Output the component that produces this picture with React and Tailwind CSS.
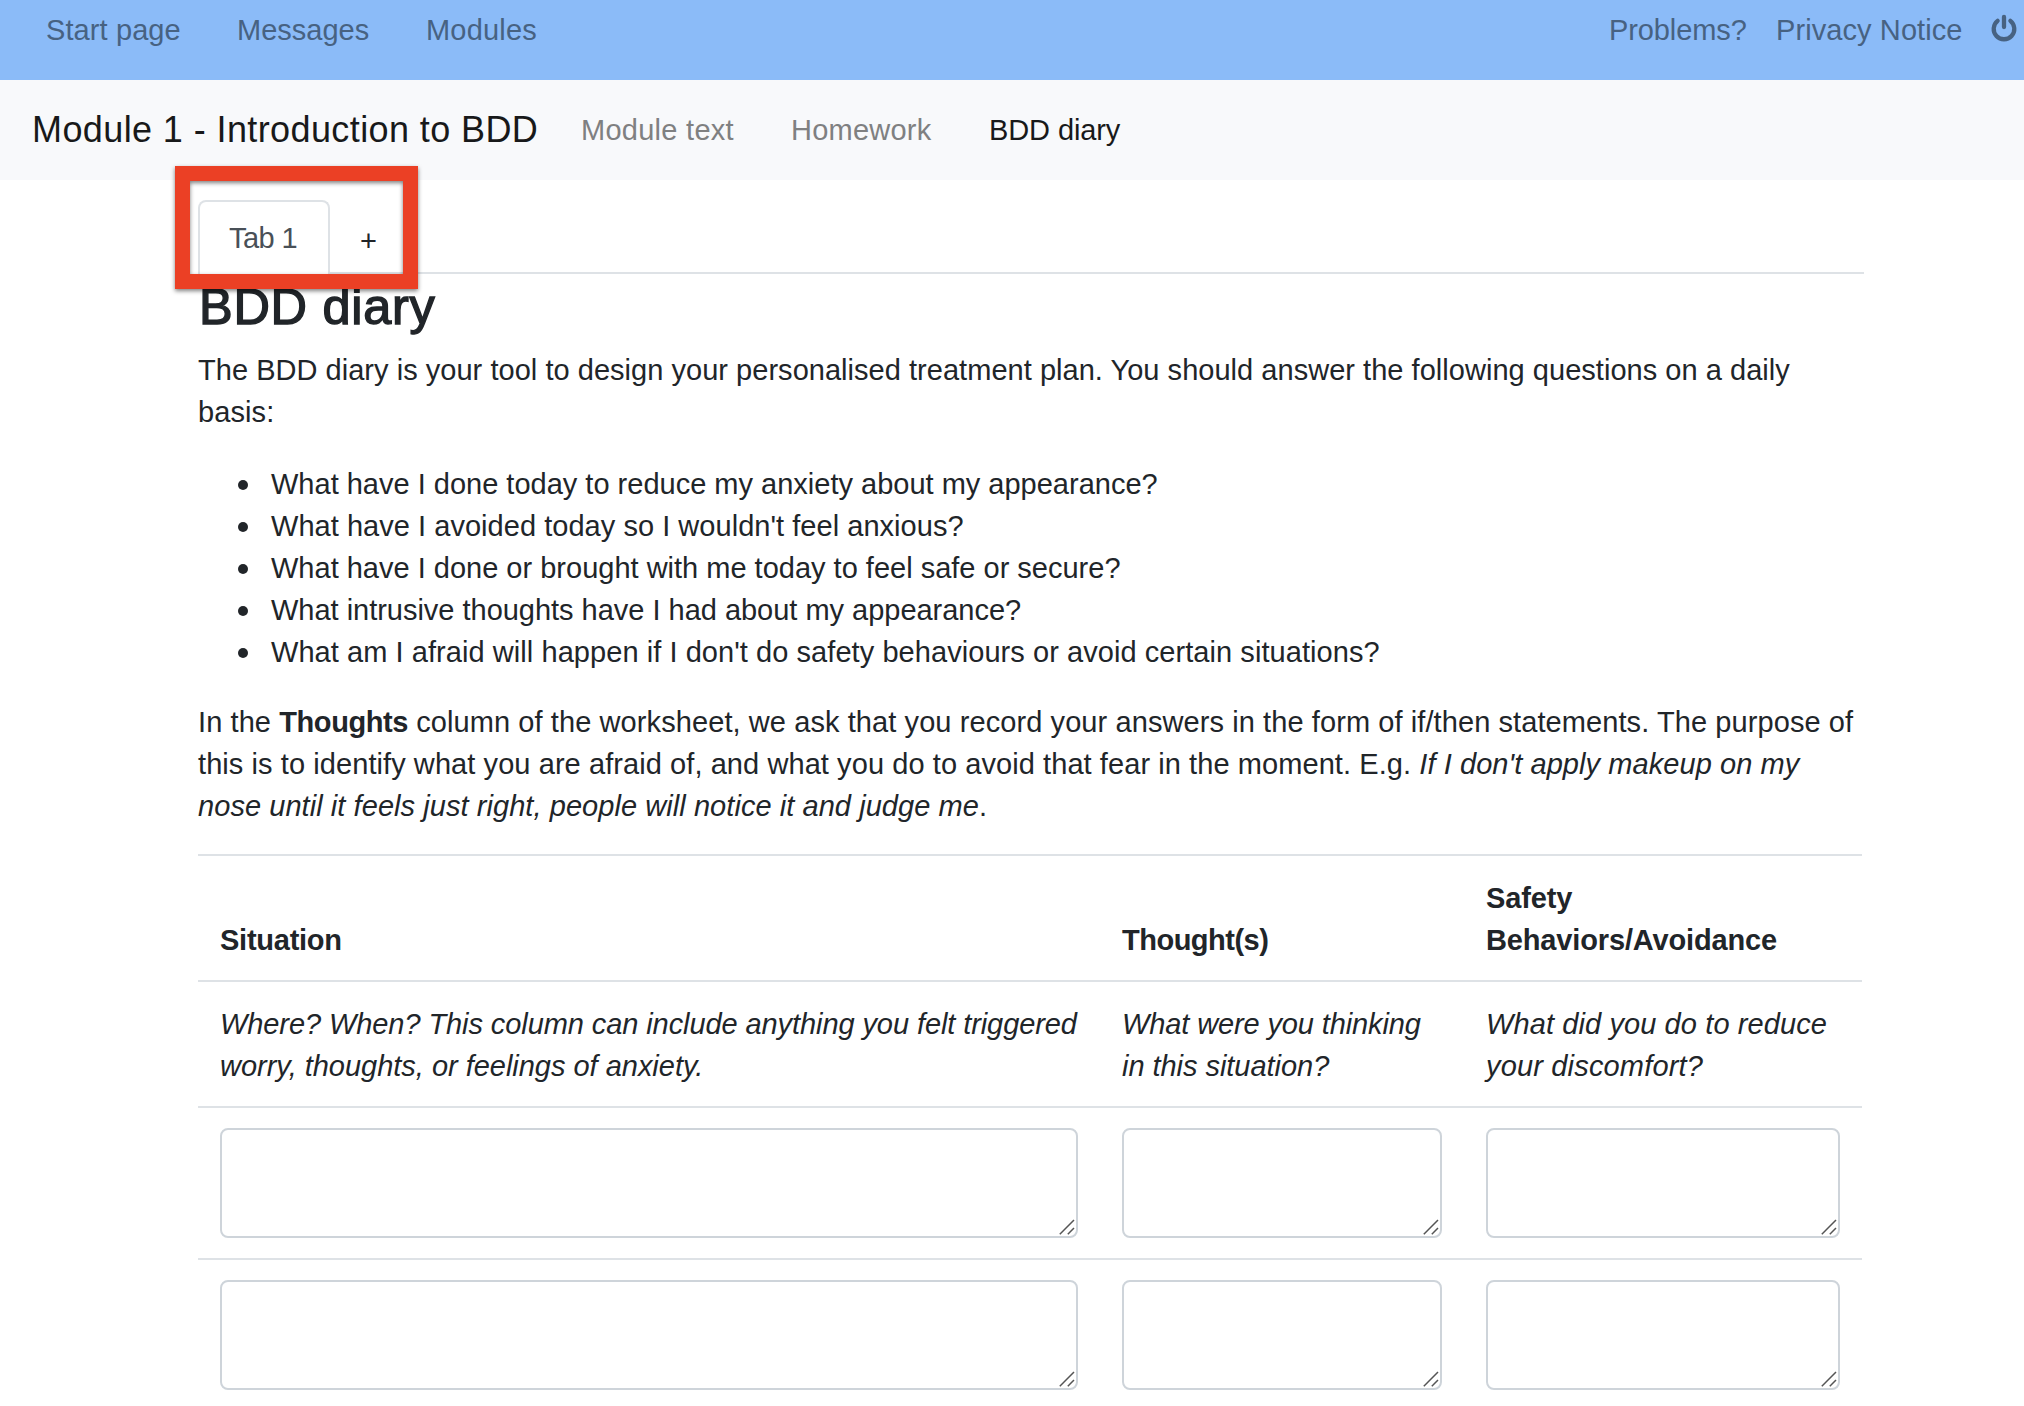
import React from "react";

function PowerIcon() {
  return (
    <svg width="26" height="28" viewBox="-13 -15 26 28" fill="none" stroke="currentColor" strokeWidth="4.3" strokeLinecap="round">
      <path d="M-6.4 -8.1A10.3 10.3 0 1 0 6.4 -8.1" />
      <path d="M0 -12V-2" />
    </svg>
  );
}

function Field() {
  return (
    <div className="relative h-[110px]">
      <textarea className="block h-full w-full resize-none rounded-[8px] border-2 border-[#ced4da] bg-white outline-none" />
      <svg className="absolute right-[3px] bottom-[3px]" width="16" height="16" viewBox="0 0 16 16" stroke="#555" strokeWidth="1.5" fill="none">
        <path d="M0.8 15.2L15 1M8.8 15.2L15 9" />
      </svg>
    </div>
  );
}

const L = ({ className = "", children }) => <span className={"block whitespace-pre " + className}>{children}</span>;

function Row({ children }) {
  return (
    <div className="grid h-[126px] grid-cols-[902px_364px_398px] border-t-2 border-[#dee2e6]">{children}</div>
  );
}

function Item({ className, children }) {
  return (
    <li className="flex items-center">
      <span className="mt-px mr-[23px] size-[10px] rounded-full bg-[#212529]" />
      <L className={className}>{children}</L>
    </li>
  );
}

export default function App() {
  return (
    <div className='h-[1406px] w-[2024px] overflow-hidden bg-white text-[29px] leading-[42px] text-[#212529] [font-family:"Liberation_Sans",Arial,sans-serif]'>
      <header className="flex h-[80px] items-start bg-[#8bbbf8] pt-[9px] pl-[46px] text-[#476282]">
        <L className="w-[191px] tracking-[0.1px]">Start page</L>
        <L className="w-[189px]">Messages</L>
        <L className="tracking-[0.2px]">Modules</L>
        <div className="ml-auto flex">
          <L className="w-[167px] tracking-[-0.1px]">Problems?</L>
          <L className="w-[215px] tracking-[0.09px]">Privacy Notice</L>
          <span className="mt-[5px] w-[33px]"><PowerIcon /></span>
        </div>
      </header>

      <nav className="flex h-[100px] items-start bg-[#f8f9fb] pt-[29px] pl-[32px] text-[#7f8081]">
        <L className="w-[549px] text-[36px] tracking-[0.4px] text-[#18191a]">Module 1 - Introduction to BDD</L>
        <L className="w-[210px] tracking-[0.27px]">Module text</L>
        <L className="w-[198px] tracking-[0.24px]">Homework</L>
        <L className="tracking-[-0.1px] text-[#18191a]">BDD diary</L>
      </nav>

      <main className="ml-[198px] w-[1666px]">
        <div className="relative flex h-[94px] items-end border-b-2 border-[#dee2e6]">
          <div className="-mb-[2px] h-[74px] w-[132px] rounded-t-[8px] border-2 border-b-0 border-[#dee2e6] bg-white pt-[15px] pl-[29px] text-[#495057]">
            <L className="tracking-[-0.6px]">Tab 1</L>
          </div>
          <div className="h-[72px] pt-[20px] pl-[30px]">+</div>
          <div className="absolute top-[-14px] left-[-23px] h-[123px] w-[243px] border-[15px] border-[#eb4025] [filter:drop-shadow(0_2px_2px_rgba(0,0,0,0.5))]" />
        </div>

        <h1 className="h-[75px] pt-[3px] pl-px text-[50.5px] leading-[60px] tracking-[0.7px] whitespace-pre [-webkit-text-stroke:1.4px_#212529]">BDD diary</h1>

        <p className="h-[114px]">
          <L className="tracking-[0.032px]">The BDD diary is your tool to design your personalised treatment plan. You should answer the following questions on a daily</L>
          <L className="tracking-[0.09px]">basis:</L>
        </p>

        <ul className="h-[238px] pl-[40px]">
          <Item>What have I done today to reduce my anxiety about my appearance?</Item>
          <Item className="tracking-[0.036px]">What have I avoided today so I wouldn't feel anxious?</Item>
          <Item>What have I done or brought with me today to feel safe or secure?</Item>
          <Item className="tracking-[-0.02px]">What intrusive thoughts have I had about my appearance?</Item>
          <Item className="tracking-[0.06px]">What am I afraid will happen if I don't do safety behaviours or avoid certain situations?</Item>
        </ul>

        <p className="h-[153px]">
          <L className="tracking-[0.085px]">In the <b className="tracking-[-0.4px]">Thoughts</b> column of the worksheet, we ask that you record your answers in the form of if/then statements. The purpose of</L>
          <L className="tracking-[0.075px]">this is to identify what you are afraid of, and what you do to avoid that fear in the moment. E.g. <i>If I don't apply makeup on my</i></L>
          <L className="tracking-[0.06px]"><i>nose until it feels just right, people will notice it and judge me</i>.</L>
        </p>

        <div className="w-[1664px]">
          <Row>
            <div className="pt-[63px] pl-[22px] font-bold"><L className="tracking-[-0.25px]">Situation</L></div>
            <div className="pt-[63px] pl-[22px] font-bold"><L className="tracking-[-0.5px]">Thought(s)</L></div>
            <div className="pt-[21px] pl-[22px] font-bold">
              <L className="tracking-[-0.15px]">Safety</L>
              <L className="tracking-[-0.15px]">Behaviors/Avoidance</L>
            </div>
          </Row>
          <Row>
            <div className="pt-[21px] pl-[22px] italic">
              <L className="tracking-[-0.086px]">Where? When? This column can include anything you felt triggered</L>
              <L className="tracking-[-0.02px]">worry, thoughts, or feelings of anxiety.</L>
            </div>
            <div className="pt-[21px] pl-[22px] italic">
              <L className="tracking-[-0.12px]">What were you thinking</L>
              <L className="tracking-[-0.04px]">in this situation?</L>
            </div>
            <div className="pt-[21px] pl-[22px] italic">
              <L className="tracking-[0.1px]">What did you do to reduce</L>
              <L className="tracking-[0.17px]">your discomfort?</L>
            </div>
          </Row>
          {[0, 1].map((r) => (
            <div key={r} className="grid h-[152px] grid-cols-[902px_364px_398px] border-t-2 border-[#dee2e6]">
              <div className="px-[22px] pt-[20px]"><Field /></div>
              <div className="px-[22px] pt-[20px]"><Field /></div>
              <div className="px-[22px] pt-[20px]"><Field /></div>
            </div>
          ))}
        </div>
      </main>
    </div>
  );
}
